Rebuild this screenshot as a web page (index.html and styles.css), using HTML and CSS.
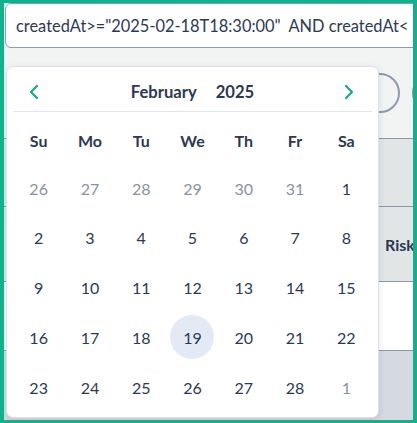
FILE: index.html
```html
<!DOCTYPE html>
<html>
<head>
    <meta charset="UTF-8">
    <title>Date filter</title>
    <link rel="stylesheet" href="styles.css">
</head>
<body>
<div class="frame">
    <!-- Query input -->
    <div class="query">createdAt&gt;="2025-02-18T18:30:00"&nbsp; AND createdAt&lt;</div>

    <!-- Toolbar behind the popover -->
    <div class="toolbar">
        <span class="round-btn"></span>
        <span class="round-btn"></span>
    </div>

    <!-- Table behind the popover -->
    <div class="table">
        <div class="row row-gray"></div>
        <div class="row row-head"><span class="col-title">Risk</span></div>
        <div class="row row-white"></div>
        <div class="row row-blue"></div>
    </div>

    <!-- Date picker -->
    <div class="picker">
        <div class="picker-head">
            <button class="nav">
                <svg width="10" height="16" viewBox="0 0 10 16"><path d="M8 2 L2 8 L8 14" fill="none" stroke="#16a888" stroke-width="2.2" stroke-linecap="round" stroke-linejoin="round"/></svg>
            </button>
            <div class="title"><span>February</span><span>2025</span></div>
            <button class="nav">
                <svg width="10" height="16" viewBox="0 0 10 16"><path d="M2 2 L8 8 L2 14" fill="none" stroke="#16a888" stroke-width="2.2" stroke-linecap="round" stroke-linejoin="round"/></svg>
            </button>
        </div>
        <div class="weekdays">
            <span>Su</span><span>Mo</span><span>Tu</span><span>We</span><span>Th</span><span>Fr</span><span>Sa</span>
        </div>
        <div class="days">
            <span class="muted">26</span><span class="muted">27</span><span class="muted">28</span><span class="muted">29</span><span class="muted">30</span><span class="muted">31</span><span>1</span>
            <span>2</span><span>3</span><span>4</span><span>5</span><span>6</span><span>7</span><span>8</span>
            <span>9</span><span>10</span><span>11</span><span>12</span><span>13</span><span>14</span><span>15</span>
            <span>16</span><span>17</span><span>18</span><span class="today">19</span><span>20</span><span>21</span><span>22</span>
            <span>23</span><span>24</span><span>25</span><span>26</span><span>27</span><span>28</span><span class="muted">1</span>
        </div>
    </div>
</div>
</body>
</html>
```

FILE: styles.css
```css
body {
    margin: 0;
    font-family: Lato, "Noto Sans", sans-serif;
    color: #2b3954;
}

.frame {
    position: relative;
    width: 417px;
    height: 423px;
    box-sizing: border-box;
    border: solid #10b28b;
    border-width: 3px 4px 3px 4px;
    background-color: #f2f3f3;
    overflow: hidden;
}

/* Query input */
.query {
    margin-left: 1px;
    width: 440px;
    height: 45px;
    box-sizing: border-box;
    padding: 0 0 0 10px;
    line-height: 43px;
    font-size: 16.4px;
    white-space: nowrap;
    background-color: white;
    border: 1px solid #8e9bb0;
    border-radius: 6px;
}

/* Toolbar */
.toolbar {
    height: 90px;
    display: flex;
    align-items: center;
    gap: 12px;
    padding-left: 356px;
}

.round-btn {
    flex: none;
    width: 40px;
    height: 40px;
    box-sizing: border-box;
    border: 2px solid #8d9ab2;
    border-radius: 50%;
}

/* Table */
.table {
    border-top: 1px solid #8c97a8;
}

.row {
    border-bottom: 1px solid #8c97a8;
}

.row-gray {
    height: 67px;
    background-color: #e2e5e6;
}

.row-head {
    height: 74px;
    background-color: #e2e5e6;
    display: flex;
    align-items: center;
    padding-left: 381px;
}

.col-title {
    font-size: 16px;
    font-weight: bold;
}

.row-white {
    height: 68px;
    background-color: white;
}

.row-blue {
    height: 80px;
    background-color: #d4d9e2;
    border-bottom: none;
}

/* Date picker */
.picker {
    position: absolute;
    left: 2px;
    top: 63px;
    width: 373px;
    height: 352px;
    box-sizing: border-box;
    padding: 0 6px;
    background-color: white;
    border: 1px solid #dde2e8;
    border-radius: 7px;
    box-shadow: 0 2px 6px rgba(40, 50, 70, 0.12);
}

.picker-head {
    height: 45px;
    box-sizing: border-box;
    padding: 5px 18px 0 16px;
    display: flex;
    align-items: center;
    justify-content: space-between;
    border-bottom: 1px solid #dfe6ec;
}

.nav {
    border: none;
    background: none;
    padding: 0;
    display: flex;
    cursor: pointer;
}

.title {
    display: flex;
    gap: 19px;
    font-size: 16.6px;
    font-weight: bold;
    padding-left: 2px;
}

.weekdays, .days {
    display: grid;
    grid-template-columns: repeat(7, 1fr);
    text-align: center;
}

.weekdays {
    margin-top: 8px;
    height: 40px;
    align-items: center;
    font-size: 16px;
    font-weight: bold;
}

.days {
    margin-top: 6px;
    grid-auto-rows: 44px;
    row-gap: 5.75px;
    font-size: 16px;
}

.days span {
    display: flex;
    align-items: center;
    justify-content: center;
}

.days .muted {
    color: #8a92a0;
}

.days .today {
    width: 44px;
    justify-self: center;
    border-radius: 50%;
    background-color: #e3e9f5;
}
```
